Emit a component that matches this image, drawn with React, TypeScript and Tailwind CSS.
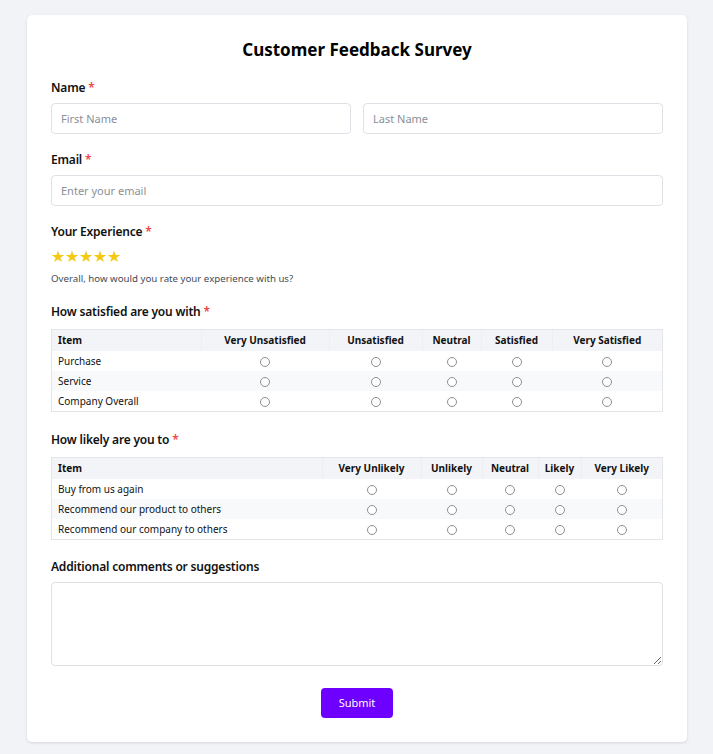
import React from "react";

const satisfaction = ["Very Unsatisfied", "Unsatisfied", "Neutral", "Satisfied", "Very Satisfied"];
const satisfactionWidths = ["w-[128px]", "w-[93px]", "w-[59px]", "w-[71px]", "w-[110px]"];
const satisfactionItems = ["Purchase", "Service", "Company Overall"];

const likely = ["Very Unlikely", "Unlikely", "Neutral", "Likely", "Very Likely"];
const likelyWidths = ["w-[99px]", "w-[61px]", "w-[56px]", "w-[43px]", "w-[81px]"];
const likelyItems = ["Buy from us again", "Recommend our product to others", "Recommend our company to others"];

function Label({ text, required }: { text: string; required?: boolean }) {
  return (
    <div className="text-[12px] font-semibold text-[#111] leading-[18px] tracking-[-0.2px]">
      {text}
      {required && <span className="text-[#ef4444]"> *</span>}
    </div>
  );
}

function Radio() {
  return <span className="inline-block align-middle w-[10px] h-[10px] rounded-full border border-[#8f8f8f] bg-white" />;
}

function Matrix({
  cols,
  widths,
  items,
  itemWidth,
}: {
  cols: string[];
  widths: string[];
  items: string[];
  itemWidth: string;
}) {
  return (
    <div className="border border-[#e3e5ea] mt-[8px]">
      <table className="w-full table-fixed border-collapse text-[10px] text-[#111]">
        <thead>
          <tr className="bg-[#f3f4f7] h-[21px]">
            <th className={`${itemWidth} text-left font-bold pl-[6px] border-r border-[#eceef2]`}>Item</th>
            {cols.map((c, i) => (
              <th
                key={c}
                className={`${widths[i]} font-bold text-center ${i < cols.length - 1 ? "border-r border-[#eceef2]" : ""}`}
              >
                {c}
              </th>
            ))}
          </tr>
        </thead>
        <tbody>
          {items.map((item, r) => (
            <tr key={item} className={`h-[20px] ${r % 2 === 1 ? "bg-[#f8f9fb]" : "bg-white"}`}>
              <td className="pl-[6px] align-middle leading-[14px]">{item}</td>
              {cols.map((c) => (
                <td key={c} className="text-center align-middle leading-[10px]">
                  <Radio />
                </td>
              ))}
            </tr>
          ))}
        </tbody>
      </table>
    </div>
  );
}

export default function App() {
  return (
    <div className="min-h-[754px] bg-[#f2f3f7] pt-[15px] pb-[13px] font-['Noto_Sans',sans-serif]">
      <div className="mx-[27px] w-[660px] rounded-[5px] bg-white px-[24px] pt-[22px] pb-[24px] shadow-[0_1px_3px_rgba(0,0,0,0.12)]">
        <h1 className="text-center text-[17px] font-bold text-black leading-[26px]">Customer Feedback Survey</h1>

        <div className="mt-[16px]">
          <Label text="Name" required />
          <div className="mt-[6px] flex gap-[12px]">
            <input
              placeholder="First Name"
              className="h-[31px] flex-1 rounded-[4px] border border-[#dfe1e6] px-[9px] text-[11px] placeholder:text-[#8a8f98] outline-none"
            />
            <input
              placeholder="Last Name"
              className="h-[31px] flex-1 rounded-[4px] border border-[#dfe1e6] px-[9px] text-[11px] placeholder:text-[#8a8f98] outline-none"
            />
          </div>
        </div>

        <div className="mt-[17px]">
          <Label text="Email" required />
          <input
            placeholder="Enter your email"
            className="mt-[6px] h-[31px] w-full rounded-[4px] border border-[#dfe1e6] px-[9px] text-[11px] placeholder:text-[#8a8f98] outline-none"
          />
        </div>

        <div className="mt-[17px]">
          <Label text="Your Experience" required />
          <div className="mt-[5px] flex text-[#f5c90f] text-[16px] leading-[20px]">
            {[0, 1, 2, 3, 4].map((i) => (
              <span key={i}>★</span>
            ))}
          </div>
          <div className="mt-[6px] text-[9.7px] leading-[14px] text-[#444b55]">
            Overall, how would you rate your experience with us?
          </div>
        </div>

        <div className="mt-[17px]">
          <Label text="How satisfied are you with" required />
          <Matrix cols={satisfaction} widths={satisfactionWidths} items={satisfactionItems} itemWidth="w-[149px]" />
        </div>

        <div className="mt-[19px]">
          <Label text="How likely are you to" required />
          <Matrix cols={likely} widths={likelyWidths} items={likelyItems} itemWidth="w-[270px]" />
        </div>

        <div className="mt-[18px]">
          <Label text="Additional comments or suggestions" />
          <textarea className="mt-[6px] block h-[84px] w-full rounded-[4px] border border-[#dfe1e6] p-[8px] text-[12px] outline-none" />
        </div>

        <div className="mt-[22px] flex justify-center">
          <button className="h-[30px] w-[72px] rounded-[4px] bg-[#6e00ff] text-[11px] text-white">Submit</button>
        </div>
      </div>
    </div>
  );
}
